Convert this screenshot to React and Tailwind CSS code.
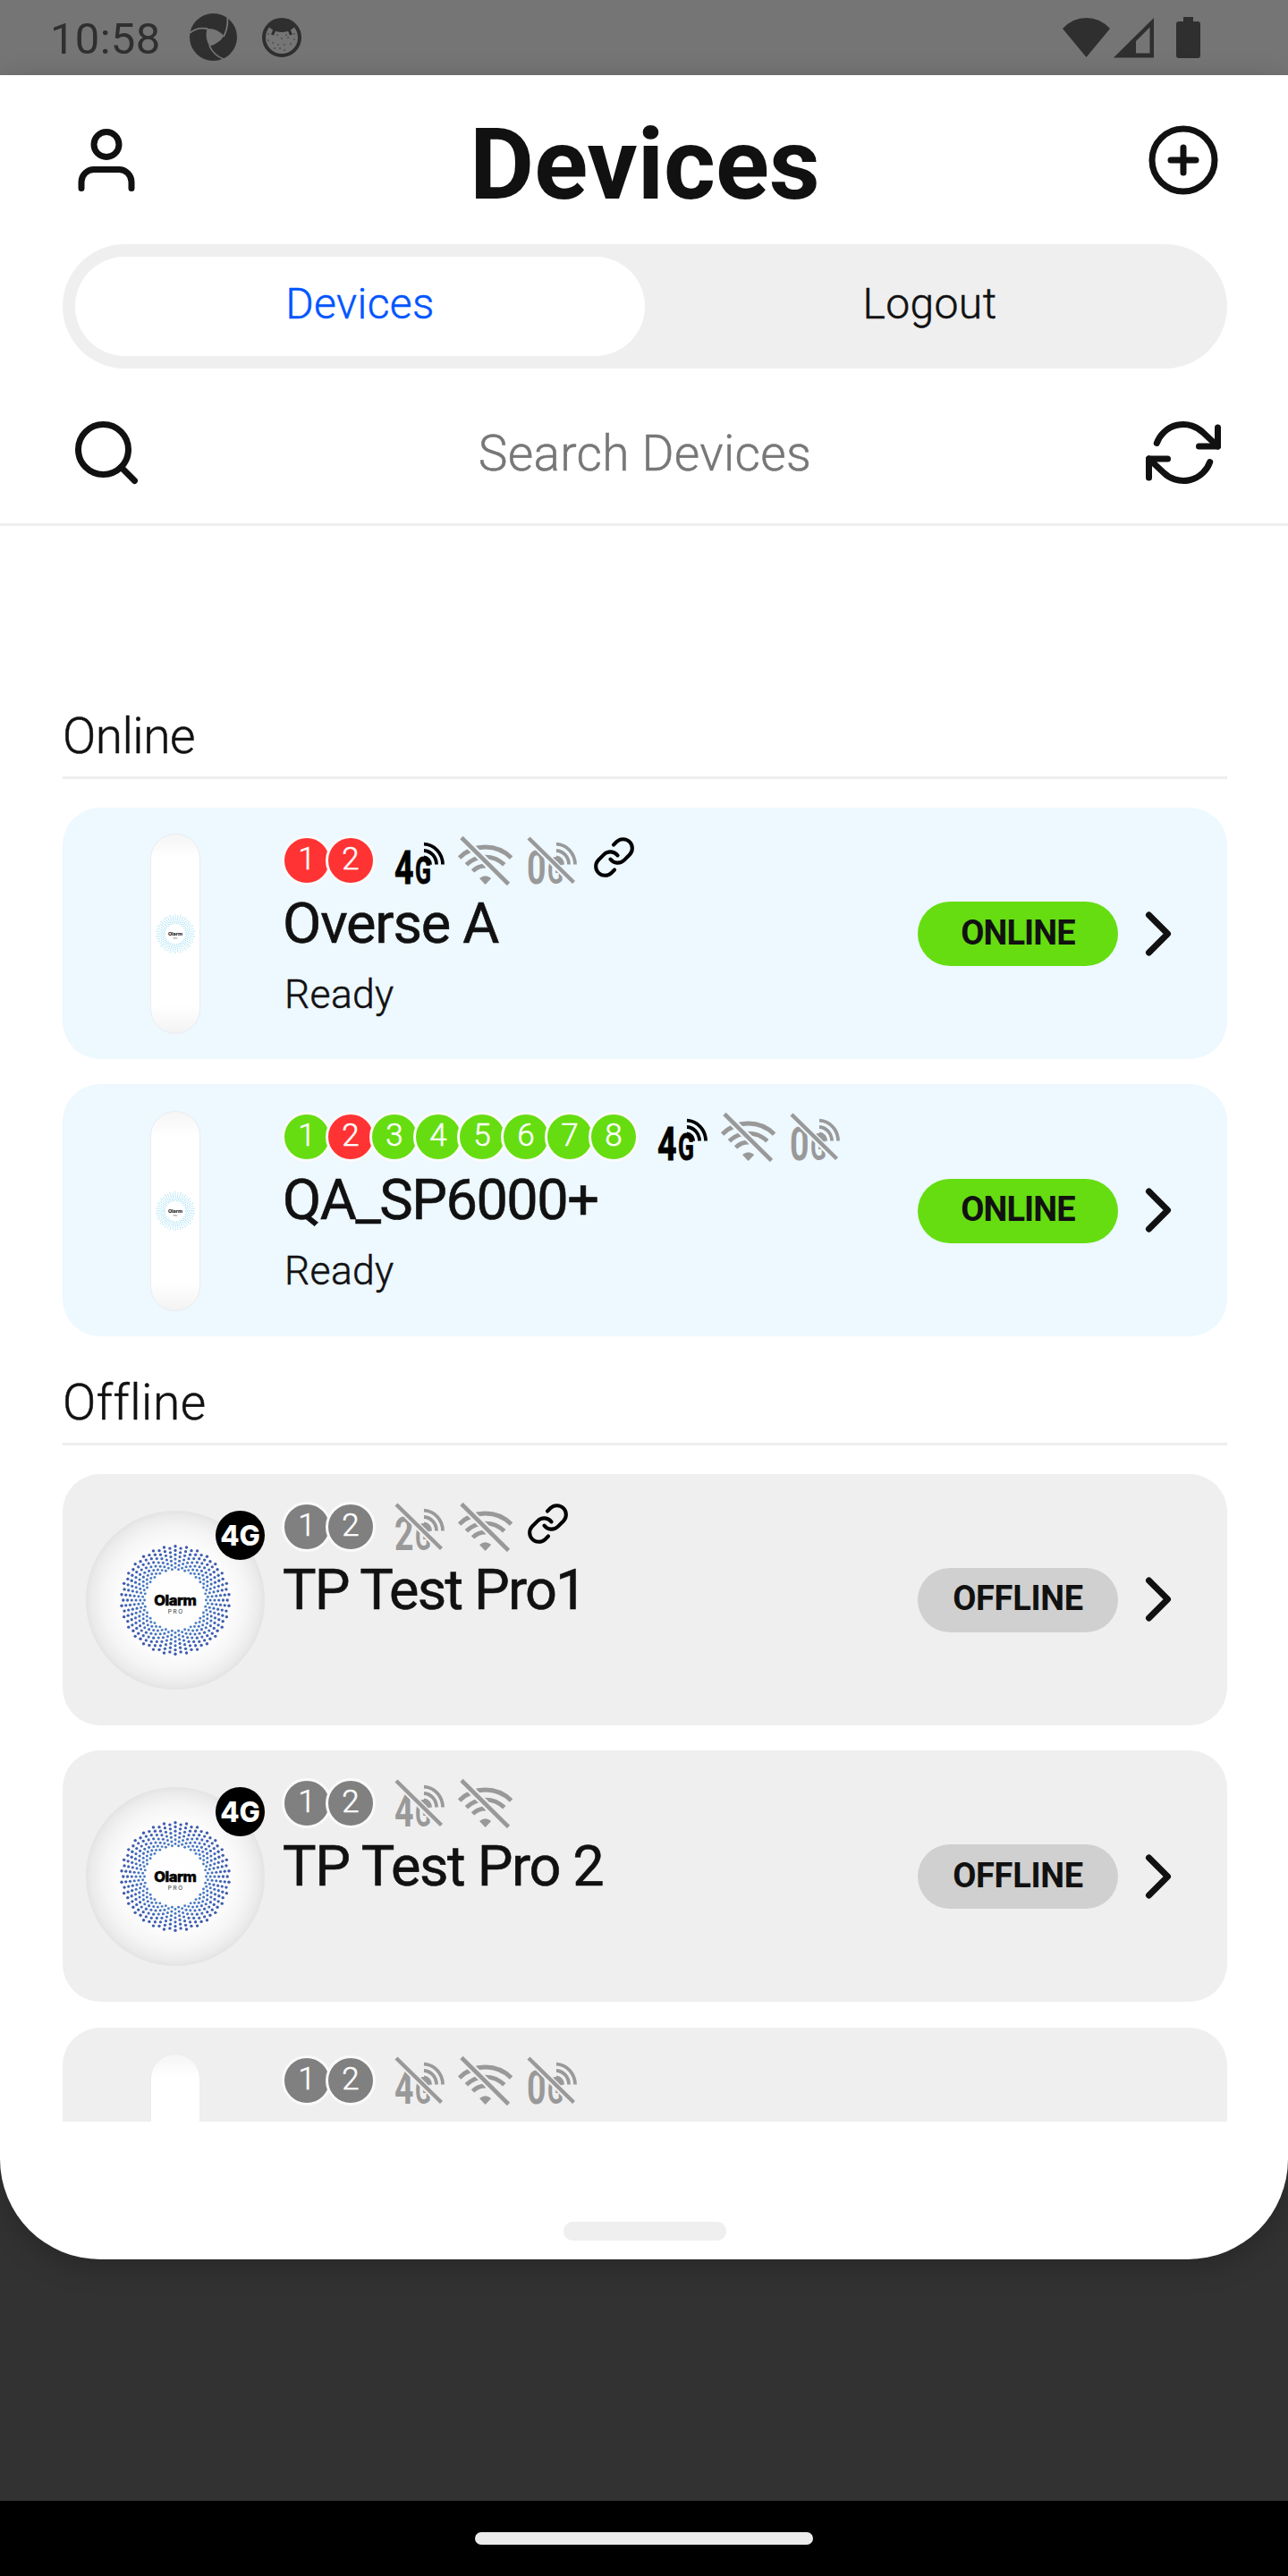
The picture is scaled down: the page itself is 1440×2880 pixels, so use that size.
import React from "react";
import clsx from "clsx";
import { ChevronRight, CirclePlus, Search } from "lucide-react";

const DEVICES = {
  online: [
    {
      model: "pod",
      areas: [["1", "red"], ["2", "red"]],
      signals: [{ type: "cell", label: "4", on: true }, { type: "wifi" }, { type: "cell", label: "0", last: true }, { type: "link" }],
      name: "Overse A",
      tracking: "tracking-[-1.2px]",
      state: "Ready",
    },
    {
      model: "pod",
      areas: [["1", "green"], ["2", "red"], ["3", "green"], ["4", "green"], ["5", "green"], ["6", "green"], ["7", "green"], ["8", "green"]],
      signals: [{ type: "cell", label: "4", on: true }, { type: "wifi" }, { type: "cell", label: "0" }],
      name: "QA_SP6000+",
      tracking: "tracking-[-1.5px]",
      state: "Ready",
    },
  ],
  offline: [
    {
      model: "pro",
      areas: [["1", "gray"], ["2", "gray"]],
      signals: [{ type: "cell", label: "2" }, { type: "wifi" }, { type: "link" }],
      name: "TP Test Pro1",
      tracking: "tracking-[-1.8px]",
    },
    {
      model: "pro",
      areas: [["1", "gray"], ["2", "gray"]],
      signals: [{ type: "cell", label: "4" }, { type: "wifi" }],
      name: "TP Test Pro 2",
      tracking: "tracking-[-1.35px]",
    },
    {
      model: "pod",
      areas: [["1", "gray"], ["2", "gray"]],
      signals: [{ type: "cell", label: "4" }, { type: "wifi" }, { type: "cell", label: "0" }],
    },
  ],
};

const AREA_COLORS = { red: "bg-[#ff3333]", green: "bg-[#66dd11]", gray: "bg-[#808080]" };

/* Spokes of dots around the speaker grille; odd spokes sit slightly closer in. */
function spokes(count, perSpoke, outer, step, stagger) {
  const dots = [];
  for (let i = 0; i < count; i++) {
    const a = (i / count) * Math.PI * 2 - Math.PI / 2;
    for (let j = 0; j < perSpoke; j++) {
      const r = outer - (i % 2 ? stagger : 0) - j * step;
      dots.push({ x: r * Math.cos(a), y: r * Math.sin(a), j });
    }
  }
  return dots;
}
const PRO_DOTS = spokes(60, 6, 60.3, 4.75, 2.1);
const POD_DOTS = spokes(44, 5, 21.2, 2.1, 1.1);
const PRO_SHADES = ["#3d5aae", "#3f5fb2", "#4166b7", "#446dbc", "#4674c0", "#4a7cc6"];

function StatusBar() {
  return (
    <div className="flex h-[84px] shrink-0 items-center bg-[#757575] pl-14 pr-[98px] text-[#2f2f2f]">
      <span className="pt-[3px] text-[49px] leading-[84px] tracking-[0.3px]">10:58</span>
      <svg className="ml-[32px] size-[54px]" viewBox="0 0 54 54">
        <circle cx="26.500" cy="26.500" r="26.500" fill="currentColor" />
        <path d="M19.500 17 Q30 16 38.300 25 Q34 33 22.300 36.700 Q16.500 27 19.500 17Z" fill="#757575" />
        <path d="M20 17 Q8 15 0 22 M38 26 Q44 14 42 2 M22 36 Q27 47 38 51" fill="none" stroke="#757575" strokeWidth="1.800" />
        <path d="M36 53 L44 47 L48 50 L44 54Z" fill="#757575" />
      </svg>
      <svg className="ml-[26px] size-[46px]" viewBox="0 0 46 46">
        <circle cx="23" cy="23" r="20" fill="none" stroke="currentColor" strokeWidth="4" />
        <path d="M8 10 Q23 -5 38 10 Q33 17 23 17 Q13 17 8 10Z" fill="currentColor" />
        <path d="M15 14 L12.500 20 M31 14 L33.500 20" stroke="currentColor" strokeWidth="3.200" />
        {[[8, 19], [18, 20], [28, 20], [37, 19], [8, 26], [13, 29], [23, 24], [30, 23], [19, 31], [26, 31], [33, 30], [37, 25], [15, 35], [21, 35], [26, 37]].map(([x, y]) => (
          <circle key={`${x}-${y}`} cx={x} cy={y} r="0.750" fill="currentColor" />
        ))}
      </svg>
      <svg className="ml-auto h-[46px] w-[53px]" viewBox="0 0 53 46">
        <path d="M0 13 Q11 1 26.500 1 Q42 1 53 13 L26.500 45Z" fill="currentColor" />
      </svg>
      <svg className="ml-1 h-[46px] w-[45px]" viewBox="0 0 45 46">
        <path fillRule="evenodd" d="M0 45.500 L45 1 V45.500Z M25 27 V40.500 H40.500 V11.500Z" fill="currentColor" />
      </svg>
      <svg className="ml-[25px] h-[46px] w-[27px]" viewBox="0 0 27 46">
        <path d="M8 0 H19 V5 H24 Q27 5 27 8 V43 Q27 46 24 46 H3 Q0 46 0 43 V8 Q0 5 3 5 H8Z" fill="currentColor" />
      </svg>
    </div>
  );
}

function CellIcon({ label, on, bg, last }) {
  const color = on ? "#000000" : "#999999";
  return (
    <svg className={clsx("h-14 w-14 shrink-0 overflow-visible", last && "mr-1")} viewBox="0 0 56 56">
      <g fill={color} fontFamily="Roboto" fontWeight="700" stroke={color} strokeWidth={on ? 0.8 : 0}>
        <text x="0" y="53.500" fontSize="51" textLength="21.500" lengthAdjust="spacingAndGlyphs">{label}</text>
        <text x="23" y="53.500" fontSize="42" textLength="18" lengthAdjust="spacingAndGlyphs">G</text>
      </g>
      <g fill="none" stroke={color} strokeWidth="3.800">
        <path d="M33 9.600 A22 23 0 0 1 54 32.600" />
        <path d="M33 17 A14.500 15.500 0 0 1 47 32.600" />
        <path d="M33 24.500 A7.500 8 0 0 1 40 32.600" />
      </g>
      {!on && (
        <>
          <line x1="5" y1="6" x2="54" y2="55" stroke={bg} strokeWidth="8" />
          <line x1="2" y1="3" x2="52.500" y2="52.500" stroke={color} strokeWidth="4.400" />
        </>
      )}
    </svg>
  );
}

function WifiOffIcon({ bg }) {
  return (
    <svg className="h-14 w-16 shrink-0" viewBox="0 0 64 56">
      <g fill="none" stroke="#999999" strokeWidth="4.800">
        <path d="M2.600 25 A41 41 0 0 1 60.600 25" />
        <path d="M10.400 32.800 A30 30 0 0 1 52.800 32.800" />
        <path d="M17.500 39.900 A20 20 0 0 1 32 34" />
      </g>
      <path d="M25 48 Q31.600 42.500 38.200 48 L31.600 55Z" fill="#999999" />
      <line x1="9" y1="6.500" x2="55" y2="52" stroke={bg} strokeWidth="9" />
      <line x1="5" y1="2.500" x2="57.500" y2="54.500" stroke="#999999" strokeWidth="4.600" />
    </svg>
  );
}

function LinkIcon() {
  return (
    <svg className="mb-[7px] ml-px size-[45px] shrink-0" viewBox="1 1 22 22" fill="none" stroke="#000000" strokeWidth="2" strokeLinecap="round" strokeLinejoin="round">
      <path d="M10 13a5 5 0 0 0 7.540.540l3-3a5 5 0 0 0-7.070-7.070l-1.720 1.710" />
      <path d="M14 11a5 5 0 0 0-7.540-.540l-3 3a5 5 0 0 0 7.070 7.070l1.710-1.710" />
    </svg>
  );
}

function RefreshIcon() {
  return (
    <svg className="size-[84px]" viewBox="0 0 24 24" fill="none" stroke="currentColor" strokeWidth="2" strokeLinecap="round" strokeLinejoin="round">
      <path d="M23 4v6h-6" />
      <path d="M1 20v-6h6" />
      <path d="M3.510 9a9 9 0 0 1 14.850-3.360L23 10M1 14l4.640 4.360A9 9 0 0 0 20.490 15" />
    </svg>
  );
}

function UserIcon() {
  return (
    <svg className="size-[84px]" viewBox="0 0 24 24" fill="none" stroke="currentColor" strokeWidth="2" strokeLinecap="round" strokeLinejoin="round">
      <path d="M20 21v-2a4 4 0 0 0-4-4H8a4 4 0 0 0-4 4v2" />
      <circle cx="12" cy="7" r="4" />
    </svg>
  );
}

function Pod() {
  return (
    <div className="flex h-[224px] w-[56px] items-center justify-center rounded-full border border-[#e9edf0] bg-[linear-gradient(to_bottom,#f5f5f5_0%,#ffffff_12%,#ffffff_86%,#f3f3f3_100%)]">
      <svg className="size-[50px]" viewBox="-25 -25 50 50">
        {POD_DOTS.map((d, i) => (
          <circle key={i} cx={d.x} cy={d.y} r="0.650" fill="#9bdcf2" />
        ))}
        <text x="0" y="1.600" textAnchor="middle" fontFamily="Inter" fontWeight="800" fontSize="5.400" fill="#222222">Olarm</text>
        <text x="0" y="6" textAnchor="middle" fontFamily="Inter" fontSize="2.400" fill="#777777">PRO</text>
      </svg>
    </div>
  );
}

function Pro() {
  return (
    <div className="relative size-[200px] rounded-full bg-[radial-gradient(closest-side,#ffffff_0%,#fcfcfc_62%,#f5f5f5_80%,#ebebeb_94%,#e3e3e3_100%)]">
      <svg className="size-full" viewBox="-100 -100 200 200">
        {PRO_DOTS.map((d, i) => (
          <circle key={i} cx={d.x} cy={d.y} r={1.7 - d.j * 0.05} fill={PRO_SHADES[d.j]} />
        ))}
        <text x="0" y="6" textAnchor="middle" fontFamily="Inter" fontWeight="800" fontSize="16.500" textLength="47.500" fill="#000000" stroke="#000000" strokeWidth="0.500">Olarm</text>
        <text x="0" y="15" textAnchor="middle" fontFamily="Inter" fontSize="6.500" textLength="16.500" fill="#333333">PRO</text>
      </svg>
      <span className="absolute right-0 top-0 flex size-[55px] items-center justify-center rounded-full bg-black font-[Inter] text-[31px] font-extrabold leading-none text-white">4G</span>
    </div>
  );
}

function DeviceCard({ device, online }) {
  const bg = online ? "#edf8ff" : "#efefef";
  return (
    <div className={clsx("flex h-[281.25px] shrink-0 items-center rounded-[42px] pl-[26px] pr-[35px]", online ? "bg-[#edf8ff]" : "bg-[#efefef]")}>
      <div className="flex w-[200px] shrink-0 justify-center pt-px">{device.model === "pod" ? <Pod /> : <Pro />}</div>
      <div className="ml-[19px] flex grow flex-col self-stretch pt-[31px]">
        <div className="flex h-14 items-center">
          <div className="flex">
            {device.areas.map(([n, c], i) => (
              <span key={n} className={clsx("flex size-14 items-center justify-center rounded-full border-[3px] border-[#fafafa] pb-[3px] text-[35px] font-light leading-none text-white [-webkit-text-stroke:0.5px_#ffffff]", i > 0 && "-ml-[7px]", AREA_COLORS[c])}>
                {n}
              </span>
            ))}
          </div>
          <div className="ml-[21px] flex h-14 items-center gap-3.5">
            {device.signals.map((s, i) => {
              if (s.type === "cell") return <CellIcon key={i} label={s.label} on={s.on} last={s.last} bg={bg} />;
              if (s.type === "wifi") return <WifiOffIcon key={i} bg={bg} />;
              return <LinkIcon key={i} />;
            })}
          </div>
        </div>
        {device.name && (
          <div className={clsx("mt-[5px] whitespace-nowrap pl-px text-[63px] leading-[76px] [-webkit-text-stroke:0.6px_#111111]", device.tracking)}>{device.name}</div>
        )}
        {device.state && <div className="mt-3.5 pl-[3px] text-[44.5px] font-light leading-[54px] tracking-[0.3px] [-webkit-text-stroke:0.5px_#111111]">{device.state}</div>}
      </div>
      {device.name && (
        <>
          <span className={clsx("mt-px flex h-[72px] w-[224px] shrink-0 items-center justify-center rounded-full pb-[3px] text-[38px] font-bold leading-none", online ? "bg-[#66dd11] tracking-[-0.9px]" : "bg-[#d0d0d0] tracking-[-0.3px]")}>
            {online ? "ONLINE" : "OFFLINE"}
          </span>
          <ChevronRight className="ml-[3px] size-[84px] shrink-0" strokeWidth={2} />
        </>
      )}
    </div>
  );
}

function Section({ title, devices, online }) {
  return (
    <section className="flex flex-col">
      <h2 className={clsx("mb-8 border-b-[3px] border-[#eeeeee] pb-1 text-[55px] font-light leading-[82px] [-webkit-text-stroke:0.5px_#111111]", online ? "tracking-[-0.5px]" : "tracking-[0.5px]")}>{title}</h2>
      <div className="flex flex-col gap-[28.2px]">
        {devices.map((d, i) => (
          <DeviceCard key={i} device={d} online={online} />
        ))}
      </div>
    </section>
  );
}

export default function App() {
  return (
    <div className="flex h-[2880px] w-[1440px] flex-col overflow-hidden bg-[#323232] font-[Roboto,sans-serif] text-[#111111]">
      <StatusBar />
      <main className="flex h-[2442px] shrink-0 flex-col rounded-b-[112px] bg-white shadow-[0_8px_32px_rgba(0,0,0,0.22)]">
        <header className="flex items-center justify-between pl-[77px] pr-[75px] pt-[53px]">
          <UserIcon />
          <h1 className="mt-2.5 text-[111px] font-bold leading-[74px]">Devices</h1>
          <CirclePlus className="size-[84px]" strokeWidth={2} />
        </header>
        <nav className="ml-[70px] mt-[52px] flex h-[139px] w-[1302px] rounded-full bg-[#efefef] p-3.5 text-[48px] font-light leading-none tracking-[0.4px]">
          <span className="flex flex-1 items-center justify-center rounded-full bg-white pb-1.5 text-[#0055ff] [-webkit-text-stroke:0.5px_#0055ff]">Devices</span>
          <span className="flex flex-1 items-center justify-center pb-1.5 [-webkit-text-stroke:0.5px_#111111]">Logout</span>
        </nav>
        <div className="mt-[52px] flex items-center justify-between border-b-[3px] border-[#eeeeee] pb-[37px] pl-[77px] pr-[75px]">
          <Search className="size-[84px]" strokeWidth={2} />
          <span className="pt-0.5 text-[55px] font-light leading-[82px] tracking-[0.3px] text-[#777777] [-webkit-text-stroke:0.5px_#777777]">Search Devices</span>
          <RefreshIcon />
        </div>
        <div className="flex h-[1784px] flex-col gap-[33px] overflow-hidden pl-[70px] pr-[68px] pt-[194px]">
          <Section title="Online" devices={DEVICES.online} online />
          <Section title="Offline" devices={DEVICES.offline} />
        </div>
        <div className="ml-[630px] mt-[112px] h-[21px] w-[182px] rounded-[10px] bg-[#efefef]" />
      </main>
      <footer className="mt-auto flex h-[84px] shrink-0 items-center justify-center bg-black">
        <div className="h-3.5 w-[378px] rounded-full bg-[#ebebeb]" />
      </footer>
    </div>
  );
}
